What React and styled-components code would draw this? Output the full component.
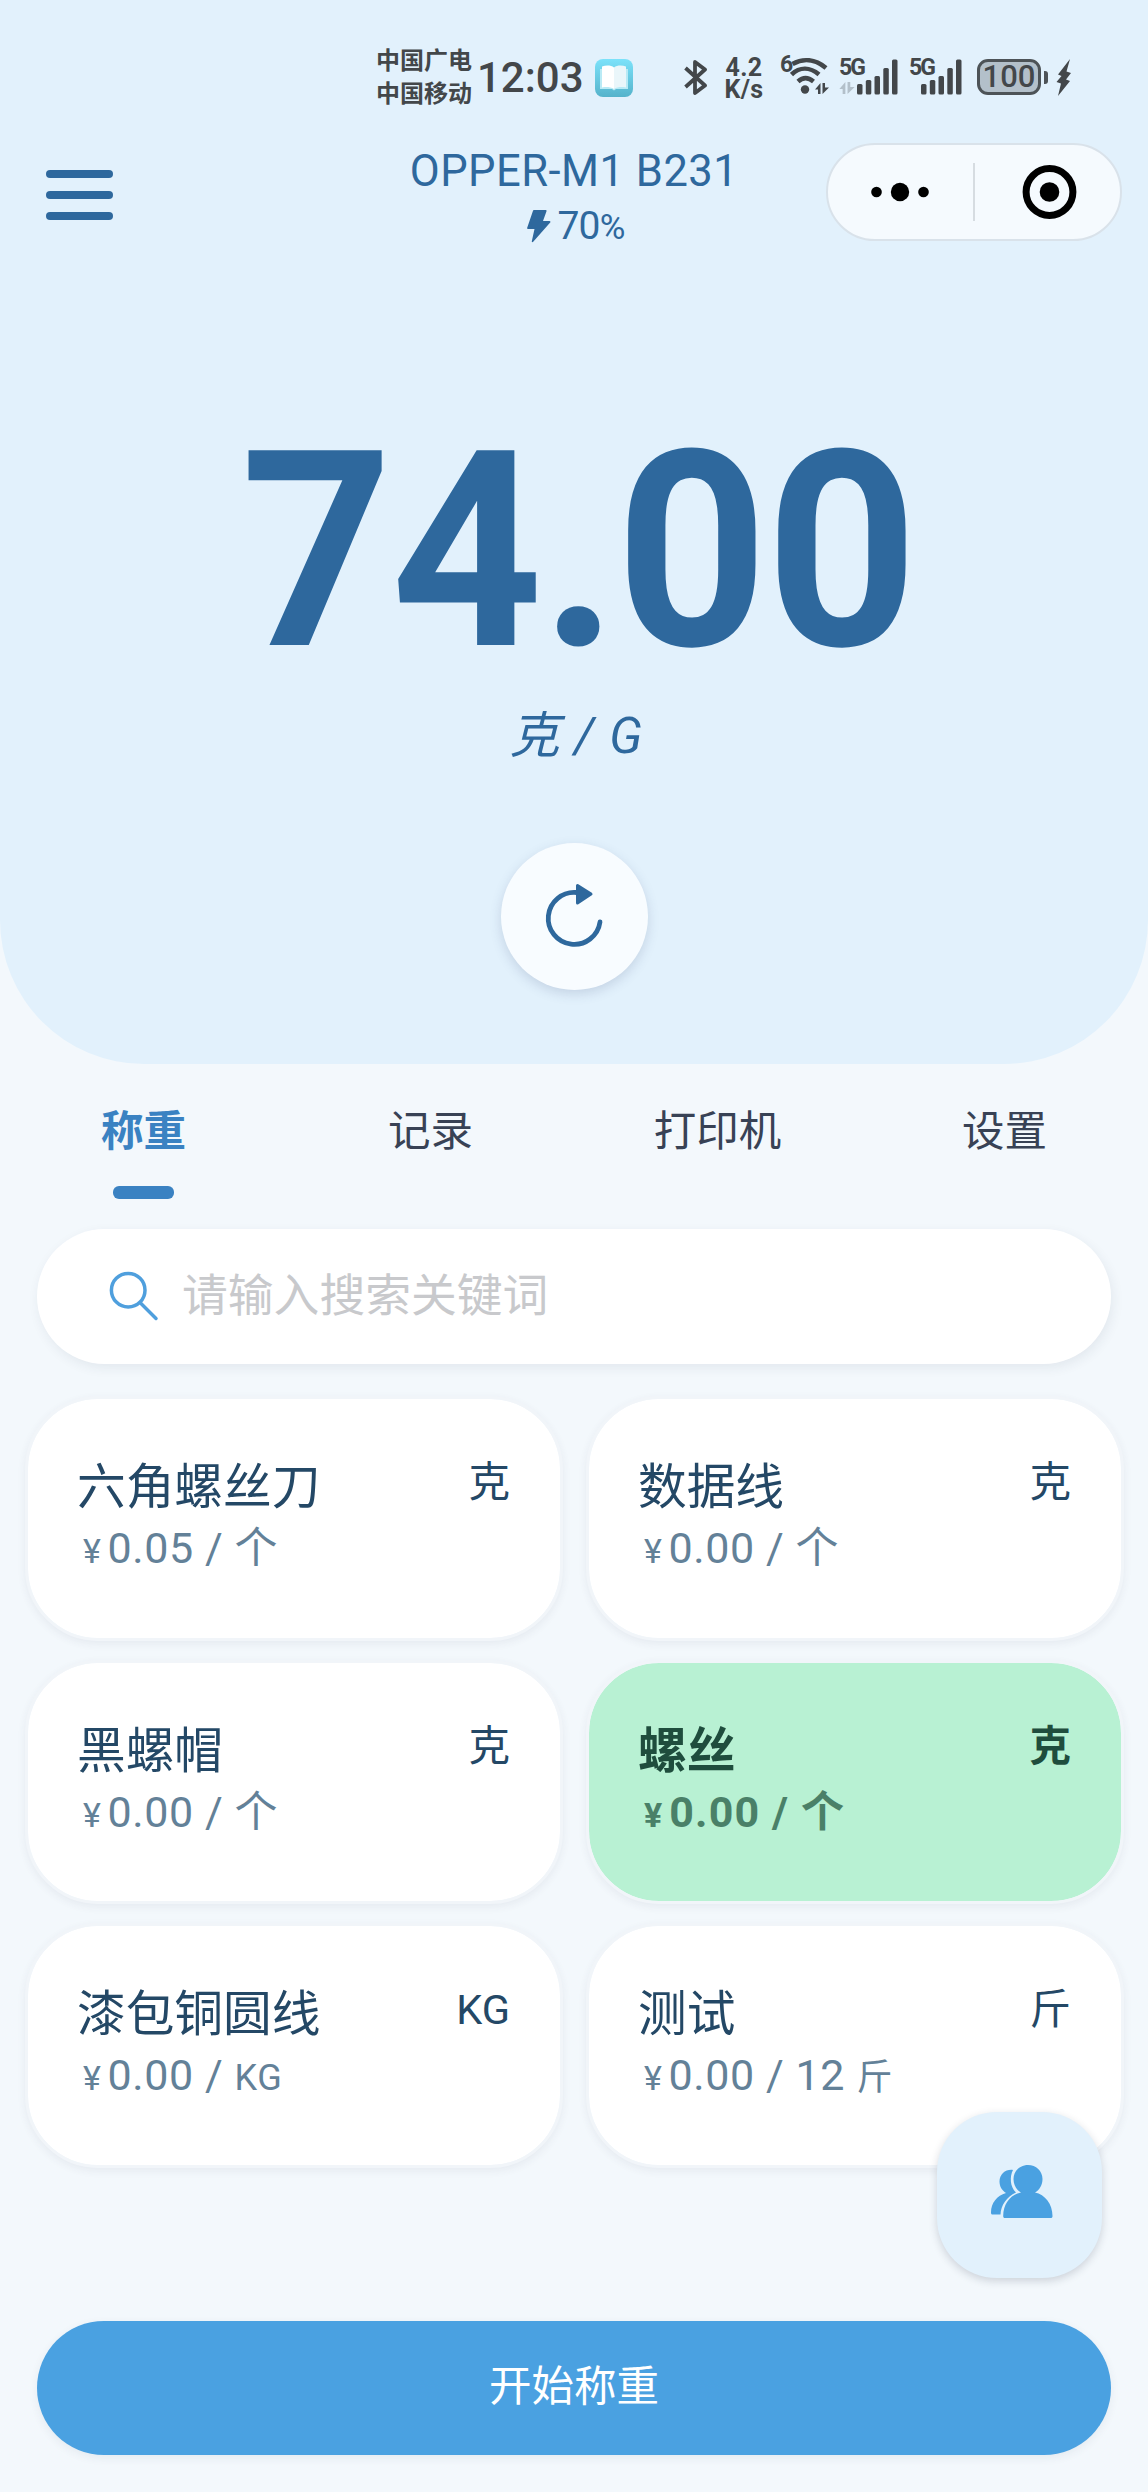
import React, { useState } from "react";
import styled, { createGlobalStyle, css } from "styled-components";

const GlobalStyle = createGlobalStyle`
  * {
    box-sizing: border-box;
  }
  body {
    margin: 0;
    background: #f3f8fc;
    font-family: Roboto, "Noto Sans CJK SC", sans-serif;
  }
  button {
    border: 0;
    padding: 0;
    background: none;
    font: inherit;
    color: inherit;
  }
  svg {
    display: block;
    flex: none;
  }
`;

const Page = styled.div`
  position: relative;
  width: 1148px;
  height: 2492px;
  overflow: hidden;
  background: #f3f8fc;
`;

const Hero = styled.section`
  display: flex;
  flex-direction: column;
  height: 1064px;
  background: #e2f1fc;
  border-radius: 0 0 144px 144px;
  color: #2e689d;
`;

const StatusBar = styled.div`
  display: flex;
  flex: none;
  align-items: flex-start;
  height: 143px;
  padding: 45px 60px 0 376px;
  color: #43474a;
`;

const Carriers = styled.div`
  flex: none;
  width: 101px;
  font-size: 24px;
  font-weight: 700;
  line-height: 33px;
  white-space: nowrap;
`;

const Clock = styled.div`
  flex: none;
  width: 118px;
  padding-top: 8px;
  font-size: 42px;
  font-weight: 500;
  line-height: 50px;
`;

const StatusIcons = styled.div`
  display: flex;
  flex: 1;
  align-items: flex-start;
  padding-top: 12px;
`;

const StatusApp = styled.div`
  width: 89px;
  padding-top: 2px;
`;

const Speed = styled.div`
  width: 42px;
  margin-left: 15px;
  font-size: 25px;
  font-weight: 700;
  line-height: 22px;
  letter-spacing: 0.4px;
  text-align: center;
`;

const Generation = styled.span`
  font-size: 23px;
  font-weight: 700;
  line-height: 20px;
  letter-spacing: -2px;
`;

const WifiBlock = styled.div`
  display: flex;
  align-items: flex-start;
  width: 48px;
  margin-left: 15px;

  ${Generation} {
    width: 10px;
    margin-top: -2px;
  }
`;

const SignalBlock = styled.div`
  display: flex;
  align-items: flex-start;
  width: 60px;
  margin-left: ${({ $gap }) => $gap}px;

  ${Generation} {
    width: 18px;
    margin-top: 1px;
  }
`;

const SignalLabel = styled.div`
  display: flex;
  flex-direction: column;
  width: ${({ $width }) => $width}px;
`;

const Muted = styled.svg`
  margin-top: 4px;
  color: #b3c0ca;
`;

const Battery = styled.div`
  display: flex;
  flex: none;
  align-items: center;
  justify-content: center;
  width: 64px;
  height: 36px;
  margin: 2px 3px 0 8px;
  border: 3px solid #4d5357;
  border-radius: 11px;
  background: #b3c0ca;
  font-size: 31px;
  font-weight: 500;
  line-height: 32px;
`;

const BatteryTip = styled.div`
  width: 4px;
  height: 13px;
  margin: 14px 8px 0 0;
  border-radius: 0 3px 3px 0;
  background: #4d5357;
`;

const Header = styled.header`
  display: grid;
  grid-template-columns: 296px 1fr 296px;
  align-items: start;
  flex: none;
  height: 98px;
  padding: 0 26px;
`;

const MenuButton = styled.button`
  display: flex;
  flex-direction: column;
  gap: 13px;
  width: 67px;
  margin: 27px 0 0 20px;
`;

const MenuLine = styled.span`
  height: 8px;
  border-radius: 4px;
  background: #2e689d;
`;

const Device = styled.div`
  display: flex;
  flex-direction: column;
  align-items: center;
  padding-top: 4px;
`;

const DeviceName = styled.div`
  font-size: 43.5px;
  line-height: 50px;
  letter-spacing: 0.5px;
  white-space: nowrap;
`;

const DeviceBattery = styled.div`
  display: flex;
  align-items: center;
  margin: 7px 0 0 4px;
  font-size: 39px;
  line-height: 44px;
  letter-spacing: -0.8px;

  svg {
    margin-right: 6px;
  }
  small {
    font-size: 35px;
  }
`;

const Capsule = styled.div`
  display: flex;
  align-items: center;
  height: 98px;
  border: 2px solid #d9e2ea;
  border-radius: 49px;
  background: #f5fafe;
`;

const CapsuleHalf = styled.div`
  display: flex;
  flex: 1;
  justify-content: center;
`;

const CapsuleDivider = styled.div`
  width: 2px;
  height: 58px;
  background: #d6dce1;
`;

const Reading = styled.div`
  margin-top: 171px;
  padding-left: 9px;
  font-size: 274px;
  font-weight: 700;
  line-height: 280px;
  letter-spacing: -2px;
  text-align: center;
  transform: scaleX(0.967);
`;

const ReadingUnit = styled.div`
  margin-top: 14px;
  padding-left: 5px;
  font-size: 50px;
  font-style: italic;
  line-height: 60px;
  letter-spacing: 1.3px;
  text-align: center;
`;

const RefreshButton = styled.button`
  display: flex;
  align-items: center;
  justify-content: center;
  width: 147px;
  height: 147px;
  margin: 77px auto 0;
  padding-bottom: 2px;
  border-radius: 50%;
  background: #f8fcff;
  box-shadow: 0 4px 12px rgba(60, 80, 120, 0.18);
`;

const Tabs = styled.nav`
  display: grid;
  grid-template-columns: repeat(4, 1fr);
  height: 165px;
  padding-top: 38px;
`;

const Tab = styled.button`
  display: flex;
  flex-direction: column;
  align-items: center;
  color: ${({ $active }) => ($active ? "#3a82c2" : "#384255")};
  font-size: 42.5px;
  font-weight: ${({ $active }) => ($active ? 700 : 400)};
  line-height: 60px;

  &::after {
    content: "";
    width: 61px;
    height: 13px;
    margin-top: 24px;
    border-radius: 6px;
    background: ${({ $active }) => ($active ? "#3a82c2" : "transparent")};
  }
`;

const SearchBox = styled.label`
  display: flex;
  align-items: center;
  width: 1074px;
  height: 135px;
  margin: 0 auto;
  padding: 0 0 2px 72px;
  border-radius: 68px;
  background: #fff;
  box-shadow: 2px 4px 12px rgba(40, 50, 80, 0.08);
`;

const SearchInput = styled.input`
  flex: 1;
  height: 80px;
  margin: 0 60px 0 23px;
  padding: 2px 0 0;
  border: 0;
  outline: 0;
  background: transparent;
  font-family: inherit;
  font-size: 45.8px;
  color: #244866;

  &::placeholder {
    color: #c8c9cc;
    opacity: 1;
  }
`;

const Goods = styled.div`
  display: grid;
  grid-template-columns: 1fr 1fr;
  gap: 19px 23px;
  margin-top: 32px;
  padding: 0 24px 0 25px;
`;

const selectedCard = css`
  background: #b8f1d3;
  background-clip: padding-box;
  color: #1f4d3d;
  font-weight: 700;
`;

const Card = styled.article`
  height: 244.6px;
  padding: 58px 50px 0 49px;
  border: 3px solid #f1f5f9;
  border-radius: 73px;
  background: #fff;
  background-clip: padding-box;
  box-shadow: 0 3px 8px rgba(50, 60, 90, 0.07);
  color: #244866;
  ${({ $selected }) => $selected && selectedCard}
`;

const CardHead = styled.div`
  display: flex;
  align-items: flex-start;
  justify-content: space-between;
`;

const GoodsName = styled.div`
  font-size: 48.7px;
  line-height: 61px;
`;

const GoodsUnit = styled.div`
  font-size: 41.5px;
  line-height: 52px;
`;

const Price = styled.div`
  margin-top: 5px;
  padding-left: 6px;
  color: ${({ $selected }) => ($selected ? "#4a8068" : "#638198")};
  font-size: 43px;
  line-height: 50px;
  letter-spacing: ${({ $selected }) => ($selected ? 1.1 : 0.6)}px;
`;

const Currency = styled.span`
  margin-right: 6px;
  font-size: 34px;
`;

const PriceUnit = styled.span`
  font-size: ${({ $small }) => ($small ? 36 : 43)}px;
`;

const StartButton = styled.button`
  display: block;
  width: 1074px;
  height: 134px;
  margin: 153px auto 0;
  padding-bottom: 11px;
  border-radius: 67px;
  background: #4aa1e1;
  box-shadow: 0 3px 10px rgba(40, 60, 90, 0.07);
  color: #fff;
  font-size: 42.5px;
`;

const CustomerButton = styled.button`
  position: absolute;
  right: 46px;
  bottom: 214px;
  display: flex;
  align-items: center;
  justify-content: center;
  width: 165px;
  height: 166px;
  padding: 0 0 6px 4px;
  border-radius: 60px;
  background: #e2f1fc;
  box-shadow: 0 3px 8px rgba(30, 40, 60, 0.18);
`;

const goods = [
  { name: "六角螺丝刀", unit: "克", price: "0.05", per: "个" },
  { name: "数据线", unit: "克", price: "0.00", per: "个" },
  { name: "黑螺帽", unit: "克", price: "0.00", per: "个" },
  { name: "螺丝", unit: "克", price: "0.00", per: "个" },
  { name: "漆包铜圆线", unit: "KG", price: "0.00", per: "KG", small: true },
  { name: "测试", unit: "斤", price: "0.00", count: "12", per: "斤", small: true },
];

const BookIcon = () => (
  <svg width="38" height="38" viewBox="0 0 38 38">
    <defs>
      <linearGradient id="book" x1="0" y1="0" x2="0" y2="1">
        <stop offset="0" stopColor="#7ce2fa" />
        <stop offset="1" stopColor="#55b3cb" />
      </linearGradient>
    </defs>
    <rect width="38" height="38" rx="8" fill="url(#book)" />
    <path d="M5 10h28v20H21l-2 1.500-2-1.500H5z" fill="#b9eaf5" />
    <path d="M7 7.500C11 6 16 6 19 8.500V30c-3-2-8-2.500-12-1.500z" fill="#fff" />
    <path d="M31 7.500C27 6 22 6 19 8.500V30c3-2 8-2.500 12-1.500z" fill="#eaf6fa" />
  </svg>
);

const BluetoothIcon = () => (
  <svg width="24" height="38" viewBox="0 0 24 38" fill="none">
    <path
      d="M1.500 11 21 28.500 11 36V5l10 7.500L1.500 30"
      stroke="currentColor"
      strokeWidth="3.800"
      strokeLinejoin="round"
    />
  </svg>
);

const TransferArrows = () => (
  <path
    d="M0 6.500 5.500 0v11H3V6.500zM7.500 0H10v4.500h4L7.500 11z"
    fill="currentColor"
  />
);

const WifiIcon = () => (
  <svg width="40" height="38" viewBox="0 0 40 38">
    <g fill="none" stroke="currentColor" strokeWidth="4.600">
      <path d="M2.500 7C13 1 25 2 36 11" />
      <path d="M1.500 17.500C10 9.500 20 10 29 17.500" />
      <path d="M8 24.500c5-4.500 10-4.500 15.500 0" />
    </g>
    <circle cx="15" cy="32.500" r="4.200" fill="currentColor" />
    <g transform="translate(25 26)">
      <TransferArrows />
    </g>
  </svg>
);

const SignalIcon = () => (
  <svg width="42" height="38" viewBox="0 0 42 38" fill="currentColor">
    <rect x="0" y="27" width="5.500" height="10.500" rx="1.500" />
    <rect x="8.800" y="23" width="5.500" height="14.500" rx="1.500" />
    <rect x="17.500" y="19" width="5.500" height="18.500" rx="1.500" />
    <rect x="26.300" y="11" width="5.500" height="26.500" rx="1.500" />
    <rect x="35" y="2.500" width="5.500" height="35" rx="1.500" />
  </svg>
);

const ChargeIcon = () => (
  <svg width="16" height="40" viewBox="0 0 16 40" fill="currentColor">
    <path d="M14 2 2 17.500l3.500 1.500L.5 25l4.500 1.500L2 39l12-15-4-1.500 5-6.500-4.500-1.500z" />
  </svg>
);

const BoltIcon = () => (
  <svg width="24" height="34" viewBox="0 0 24 34" fill="currentColor">
    <path d="M7 0h11.500a1 1 0 0 1 1 1.300L16 11h6.500a.9.9 0 0 1 .7 1.500L6.200 31.800c-.8.800-1.600.3-1.400-.6L7.500 19H1a.9.9 0 0 1-.8-1.200L6 .7A1 1 0 0 1 7 0z" />
  </svg>
);

const MoreIcon = () => (
  <svg width="60" height="20" viewBox="0 0 60 20" fill="#000">
    <circle cx="5.500" cy="10" r="5.300" />
    <circle cx="29" cy="10" r="9.200" />
    <circle cx="52.500" cy="10" r="5.300" />
  </svg>
);

const CloseIcon = () => (
  <svg width="60" height="54" viewBox="0 0 60 54">
    <circle cx="31.500" cy="27" r="23.400" fill="none" stroke="#000" strokeWidth="7" />
    <circle cx="31.500" cy="27" r="9.800" fill="#000" />
  </svg>
);

const RefreshIcon = () => (
  <svg width="64" height="70" viewBox="0 0 64 70" fill="none">
    <path
      d="M34.500 11.500A26 26 0 1 0 58 41"
      stroke="#2e689d"
      strokeWidth="4.800"
      strokeLinecap="round"
    />
    <path
      d="M35.500 4.500v17.500L49 13z"
      fill="#2e689d"
      stroke="#2e689d"
      strokeWidth="3"
      strokeLinejoin="round"
    />
  </svg>
);

const SearchIcon = () => (
  <svg width="50" height="50" viewBox="0 0 50 50" fill="none">
    <g stroke="#4f9fdd" strokeWidth="3.500" strokeLinecap="round">
      <circle cx="19.200" cy="19.200" r="16.800" />
      <path d="M31.500 32 47 47.500" />
    </g>
  </svg>
);

const CustomersIcon = () => (
  <svg width="62" height="54" viewBox="0 0 62 54" fill="#4aa1e1">
    <path d="M22 5C15 4 8.500 9 8.500 16.500c0 5 2.500 9 6.500 11.500C6 30.500 0 38 0 47.500 0 49 .5 49.500 1.500 49.500H9.500C10 40 15.500 32 25 27.500 19 22 18.500 11.500 22 5z" />
    <path d="M37 0c8 0 14.500 6 14.500 14 0 6-3 11-7.500 13.500C54 29.500 61.500 39 61.500 51c0 1.500-.5 2-2 2H14c-1.300 0-1.800-.5-1.800-2 0-12 7.300-21.500 17.800-23.500-4.500-2.500-7.500-7.500-7.500-13.500C22.500 6 29 0 37 0z" />
  </svg>
);

function GoodsCard({ item, selected, onSelect }) {
  return (
    <Card $selected={selected} onClick={onSelect}>
      <CardHead>
        <GoodsName>{item.name}</GoodsName>
        <GoodsUnit>{item.unit}</GoodsUnit>
      </CardHead>
      <Price $selected={selected}>
        <Currency>¥</Currency>
        {item.price} / {item.count ? item.count + " " : ""}
        <PriceUnit $small={item.small}>{item.per}</PriceUnit>
      </Price>
    </Card>
  );
}

function App() {
  const [tab, setTab] = useState("称重");
  const [selected, setSelected] = useState("螺丝");
  const [keyword, setKeyword] = useState("");

  return (
    <Page>
      <GlobalStyle />
      <Hero>
        <StatusBar>
          <Carriers>
            <div>中国广电</div>
            <div>中国移动</div>
          </Carriers>
          <Clock>12:03</Clock>
          <StatusIcons>
            <StatusApp>
              <BookIcon />
            </StatusApp>
            <BluetoothIcon />
            <Speed>
              <div>4.2</div>
              <div>K/s</div>
            </Speed>
            <WifiBlock>
              <Generation>6</Generation>
              <WifiIcon />
            </WifiBlock>
            <SignalBlock $gap={11}>
              <SignalLabel $width={18}>
                <Generation>5G</Generation>
                <Muted width="16" height="12" viewBox="0 0 14 11">
                  <TransferArrows />
                </Muted>
              </SignalLabel>
              <SignalIcon />
            </SignalBlock>
            <SignalBlock $gap={10}>
              <SignalLabel $width={12}>
                <Generation>5G</Generation>
              </SignalLabel>
              <SignalIcon />
            </SignalBlock>
            <Battery>100</Battery>
            <BatteryTip />
            <ChargeIcon />
          </StatusIcons>
        </StatusBar>

        <Header>
          <MenuButton>
            <MenuLine />
            <MenuLine />
            <MenuLine />
          </MenuButton>
          <Device>
            <DeviceName>OPPER-M1 B231</DeviceName>
            <DeviceBattery>
              <BoltIcon />
              <span>
                70<small>%</small>
              </span>
            </DeviceBattery>
          </Device>
          <Capsule>
            <CapsuleHalf>
              <MoreIcon />
            </CapsuleHalf>
            <CapsuleDivider />
            <CapsuleHalf>
              <CloseIcon />
            </CapsuleHalf>
          </Capsule>
        </Header>

        <Reading>74.00</Reading>
        <ReadingUnit>克 / G</ReadingUnit>
        <RefreshButton>
          <RefreshIcon />
        </RefreshButton>
      </Hero>

      <Tabs>
        {["称重", "记录", "打印机", "设置"].map((name) => (
          <Tab key={name} $active={name === tab} onClick={() => setTab(name)}>
            {name}
          </Tab>
        ))}
      </Tabs>

      <SearchBox>
        <SearchIcon />
        <SearchInput
          value={keyword}
          placeholder="请输入搜索关键词"
          onChange={(e) => setKeyword(e.target.value)}
        />
      </SearchBox>

      <Goods>
        {goods
          .filter((item) => item.name.includes(keyword))
          .map((item) => (
            <GoodsCard
              key={item.name}
              item={item}
              selected={item.name === selected}
              onSelect={() => setSelected(item.name)}
            />
          ))}
      </Goods>

      <StartButton>开始称重</StartButton>
      <CustomerButton>
        <CustomersIcon />
      </CustomerButton>
    </Page>
  );
}

export default App;
